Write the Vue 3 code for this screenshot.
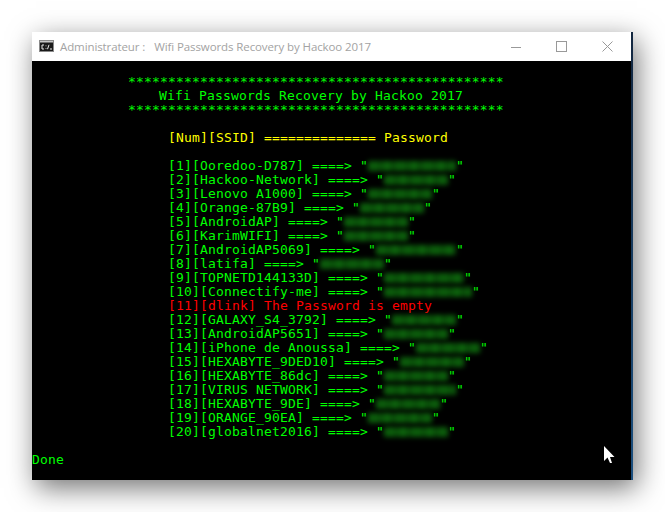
<script setup>
const rows = [
  ['[1][Ooredoo-D787]', 11], ['[2][Hackoo-Network]', 8], ['[3][Lenovo A1000]', 8], ['[4][Orange-87B9]', 8],
  ['[5][AndroidAP]', 8], ['[6][KarimWIFI]', 8], ['[7][AndroidAP5069]', 10], ['[8][latifa]', 8],
  ['[9][TOPNETD144133D]', 10], ['[10][Connectify-me]', 11], ['[11][dlink]', 0], ['[12][GALAXY_S4_3792]', 8],
  ['[13][AndroidAP5651]', 8], ['[14][iPhone de Anoussa]', 8], ['[15][HEXABYTE_9DED10]', 8], ['[16][HEXABYTE_86dc]', 8],
  ['[17][VIRUS NETWORK]', 9], ['[18][HEXABYTE_9DE]', 8], ['[19][ORANGE_90EA]', 8], ['[20][globalnet2016]', 8]
]
const stars = '*'.repeat(47)
</script>

<template>
  <div class="page">
    <div class="window">
      <header class="titlebar">
        <svg class="cmd" width="15" height="12" viewBox="0 0 15 12">
          <rect x="0" y="0" width="15" height="12" fill="#1a1a1a" />
          <rect x="0.5" y="0.5" width="14" height="11" fill="none" stroke="#8a8a8a" stroke-width="1" />
          <rect x="1" y="1" width="13" height="1.5" fill="#c8c8c8" />
          <path d="M5 5H3V9H5M7 5.5V6.2M7 8V8.7M8.5 9.2L10 4.8M11 9H13" stroke="#e8e8e8" stroke-width="1" fill="none" />
        </svg>
        <span class="title">Administrateur :</span>
        <span class="title wifi">Wifi Passwords Recovery by Hackoo 2017</span>
        <div class="controls">
          <svg width="10" height="10" viewBox="0 0 10 10"><path d="M0 5.5H10" stroke="#999" /></svg>
          <svg width="11" height="11" viewBox="0 0 11 11"><rect x="0.5" y="0.5" width="10" height="10" fill="none" stroke="#999" /></svg>
          <svg width="11" height="11" viewBox="0 0 11 11"><path d="M0.5 0.5L10.5 10.5M10.5 0.5L0.5 10.5" stroke="#999" /></svg>
        </div>
      </header>
      <div class="console">
        <div class="line stars">{{ stars }}</div>
        <div class="line heading">Wifi Passwords Recovery by Hackoo 2017</div>
        <div class="line stars">{{ stars }}</div>
        <div class="line"></div>
        <div class="line list yellow">[Num][SSID] ============== Password</div>
        <div class="line"></div>
        <div v-for="[label, n] in rows" :key="label" class="line list" :class="{ red: n === 0 }">
          <template v-if="n === 0">{{ label }} The Password is empty</template>
          <template v-else>{{ label }} ====&gt; "<span class="smudge" :style="{ width: n * 8 + 'px' }"></span>"</template>
        </div>
        <div class="line"></div>
        <div class="line">Done</div>
      </div>
      <svg class="cursor" width="12" height="18" viewBox="0 0 12 18">
        <path d="M0 0V15L3.5 11.5L6 17H8L6 11H10.5Z" fill="#fff" />
      </svg>
    </div>
  </div>
</template>

<style scoped>
.page {
  width: 665px;
  height: 512px;
  padding: 32px;
  box-sizing: border-box;
  background: #fff;
  overflow: hidden;
}
.window {
  position: relative;
  width: 601px;
  height: 448px;
  box-sizing: border-box;
  display: flex;
  flex-direction: column;
  border-right: 2px solid;
  border-image: linear-gradient(#12263f, #1c4f7e) 1;
  box-shadow: 4px 8px 26px rgba(0, 0, 0, 0.55);
}
.titlebar {
  height: 29px;
  flex: none;
  display: flex;
  align-items: center;
  background: #fff;
  padding-left: 7px;
}
.cmd { flex: none; margin-top: -1px; }
.title {
  margin-left: 6px;
  font: 11.5px "Open Sans", "Noto Sans", sans-serif;
  letter-spacing: -0.1px;
  color: #a3a3a3;
  white-space: pre;
}
.wifi { margin-left: 9px; }
.controls {
  margin-left: auto;
  display: flex;
  align-items: center;
  gap: 35px;
  padding-right: 18px;
}
.controls svg { display: block; }
.console {
  flex: 1;
  background: #000;
  padding-top: 14px;
  color: #00ff00;
  font: 13px/14px "DejaVu Sans Mono", monospace;
  letter-spacing: 0.17px;
}
.line {
  height: 14px;
  white-space: pre;
}
.stars { padding-left: 96px; }
.heading { padding-left: 127px; }
.list { padding-left: 136px; }
.yellow { color: #ffff00; }
.red { color: #ff0000; }
.smudge {
  display: inline-block;
  height: 10px;
  vertical-align: -1px;
  background: repeating-linear-gradient(90deg, #0b5c0b 0 11px, #094a09 11px 15px, #0c620c 15px 23px, #084508 23px 27px);
  filter: blur(2.5px);
}
.cursor {
  position: absolute;
  left: 572px;
  top: 414px;
}
</style>

<style>
html, body { margin: 0; background: #fff; }
</style>
